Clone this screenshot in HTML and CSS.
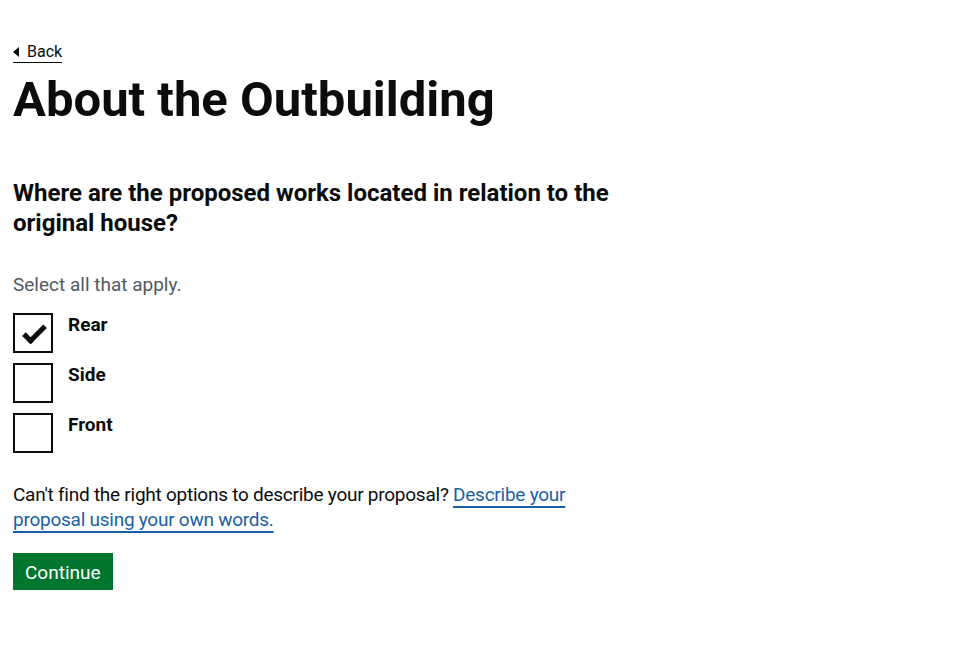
FILE: index.html
```html
<!DOCTYPE html>
<html lang="en">
<head>
<meta charset="utf-8">
<title>About the Outbuilding</title>
<link rel="stylesheet" href="styles.css">
</head>
<body>
<div class="page">
  <a class="back-link" href="#">Back</a>
  <h1 class="title">About the Outbuilding</h1>
  <fieldset class="fieldset">
    <legend class="legend">Where are the proposed works located in relation to the original house?</legend>
    <div class="hint">Select all that apply.</div>
    <div class="checkboxes">
      <label class="checkbox">
        <input type="checkbox" checked>
        <span class="box"></span>
        <span class="label-text">Rear</span>
      </label>
      <label class="checkbox">
        <input type="checkbox">
        <span class="box"></span>
        <span class="label-text">Side</span>
      </label>
      <label class="checkbox">
        <input type="checkbox">
        <span class="box"></span>
        <span class="label-text">Front</span>
      </label>
    </div>
  </fieldset>
  <p class="body">Can't find the right options to describe your proposal? <a class="link" href="#">Describe your proposal using your own words.</a></p>
  <button class="button" type="button">Continue</button>
</div>
</body>
</html>
```
FILE: styles.css
```css
* { box-sizing: border-box; }
html, body { margin: 0; padding: 0; background: #fff; }
body {
  font-family: Roboto, "Liberation Sans", Arial, sans-serif;
  color: #0b0c0c;
}
.page {
  padding: 40px 13px 0;
  width: 640px;
}
.back-link {
  display: inline-block;
  position: relative;
  font-size: 16px;
  line-height: 20px;
  color: #0b0c0c;
  text-decoration: none;
  padding-left: 14px;
  border-bottom: 1px solid #0b0c0c;
  padding-top: 2px;
  padding-bottom: 0;
}
.back-link::before {
  content: "";
  position: absolute;
  left: 0;
  top: 7px;
  border-style: solid;
  border-width: 5px 6px 5px 0;
  border-color: transparent #0b0c0c transparent transparent;
}
.title {
  font-size: 49px;
  line-height: 52px;
  font-weight: 700;
  margin: 11px 0 0;
}
.fieldset {
  border: 0;
  margin: 0;
  padding: 0;
  margin-top: 52px;
}
.legend {
  padding: 0;
  font-size: 24px;
  line-height: 30px;
  font-weight: 700;
}
.hint {
  margin-top: 34px;
  font-size: 19px;
  line-height: 25px;
  color: #505a5f;
}
.checkboxes {
  margin-top: 16px;
  display: flex;
  flex-direction: column;
  gap: 10px;
}
.checkbox {
  display: flex;
  align-items: flex-start;
  position: relative;
  min-height: 40px;
}
.checkbox input {
  position: absolute;
  opacity: 0;
  width: 40px;
  height: 40px;
  margin: 0;
}
.box {
  width: 40px;
  height: 40px;
  border: 2px solid #0b0c0c;
  position: relative;
  flex: none;
}
.checkbox input:checked + .box::after {
  content: "";
  position: absolute;
  left: 8px;
  top: 11px;
  width: 18px;
  height: 7px;
  border: solid #0b0c0c;
  border-width: 0 0 5px 5px;
  transform: rotate(-45deg);
}
.label-text {
  margin-left: 15px;
  font-size: 19px;
  line-height: 25px;
  font-weight: 700;
  margin-top: -1px;
}
.body {
  margin: 29px 0 0;
  font-size: 19px;
  line-height: 25px;
  letter-spacing: -0.25px;
}
.link {
  color: #1a5fa6;
  text-decoration: underline;
  text-underline-offset: 5px;
  text-decoration-thickness: 2px;
}
.button {
  margin-top: 21px;
  font-family: inherit;
  font-size: 19px;
  line-height: 19px;
  color: #fff;
  background: #00762f;
  border: 0;
  border-radius: 0;
  padding: 10px 12px 8px;
  box-shadow: 0 2px 0 #002d18;
  cursor: pointer;
}
```
